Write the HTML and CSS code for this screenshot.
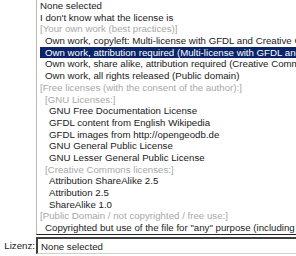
FILE: index.html
```html
<!DOCTYPE html>
<html lang="de">
<head>
    <meta charset="UTF-8">
    <title>Lizenz</title>
    <link rel="stylesheet" href="styles.css">
</head>
<body>
    <div class="picker">
        <ul class="options">
            <li class="opt">None selected</li>
            <li class="opt">I don't know what the license is</li>
            <li class="opt group">[Your own work (best practices)]</li>
            <li class="opt lvl1">Own work, copyleft: Multi-license with GFDL and Creative Commons Attribution ShareAlike</li>
            <li class="opt lvl1 selected">Own work, attribution required (Multi-license with GFDL and Creative Commons Attribution)</li>
            <li class="opt lvl1">Own work, share alike, attribution required (Creative Commons ShareAlike)</li>
            <li class="opt lvl1">Own work, all rights released (Public domain)</li>
            <li class="opt group">[Free licenses (with the consent of the author):]</li>
            <li class="opt group lvl1">[GNU Licenses:]</li>
            <li class="opt lvl2">GNU Free Documentation License</li>
            <li class="opt lvl2">GFDL content from English Wikipedia</li>
            <li class="opt lvl2">GFDL images from http://opengeodb.de</li>
            <li class="opt lvl2">GNU General Public License</li>
            <li class="opt lvl2">GNU Lesser General Public License</li>
            <li class="opt group lvl1">[Creative Commons licenses:]</li>
            <li class="opt lvl2">Attribution ShareAlike 2.5</li>
            <li class="opt lvl2">Attribution 2.5</li>
            <li class="opt lvl2">ShareAlike 1.0</li>
            <li class="opt group">[Public Domain / not copyrighted / free use:]</li>
            <li class="opt lvl1">Copyrighted but use of the file for "any" purpose (including commercial)</li>
        </ul>
        <div class="field">
            <label class="field-label">Lizenz:</label>
            <div class="select">None selected</div>
        </div>
    </div>
</body>
</html>
```

FILE: styles.css
```css
html, body {
    margin: 0;
    padding: 0;
    background: #ffffff;
    overflow: hidden;
}

body {
    font-family: "Liberation Sans", Arial, sans-serif;
    font-size: 9.7px;
    color: #1a1a1a;
    width: 296px;
    height: 256px;
}

.picker {
    display: flex;
    flex-direction: column;
}

.options {
    list-style: none;
    margin: 0 0 0 36px;
    padding: 0;
    width: 320px;
    border-left: 1px solid #b8b8b8;
    border-bottom: 1px solid #202020;
}

.opt {
    height: 11.7px;
    line-height: 11.7px;
    padding-left: 3px;
    white-space: nowrap;
    overflow: hidden;
}

.opt.lvl1 {
    padding-left: 8px;
}

.opt.lvl2 {
    padding-left: 12px;
}

.opt.group {
    color: #a8a8a8;
}

.opt.selected {
    background: #0a246a;
    color: #ffffff;
    margin-left: 3px;
    padding-left: 5px;
}

.field {
    display: flex;
    align-items: center;
    margin-top: 2px;
}

.field-label {
    width: 36px;
    text-align: right;
    padding-right: 1px;
    box-sizing: border-box;
}

.select {
    flex: 1;
    height: 17px;
    line-height: 15px;
    padding-left: 3px;
    white-space: nowrap;
    border-top: 2px solid #404040;
    border-left: 2px solid #404040;
    border-bottom: 1px solid #d4d0c8;
    box-sizing: border-box;
}
```
